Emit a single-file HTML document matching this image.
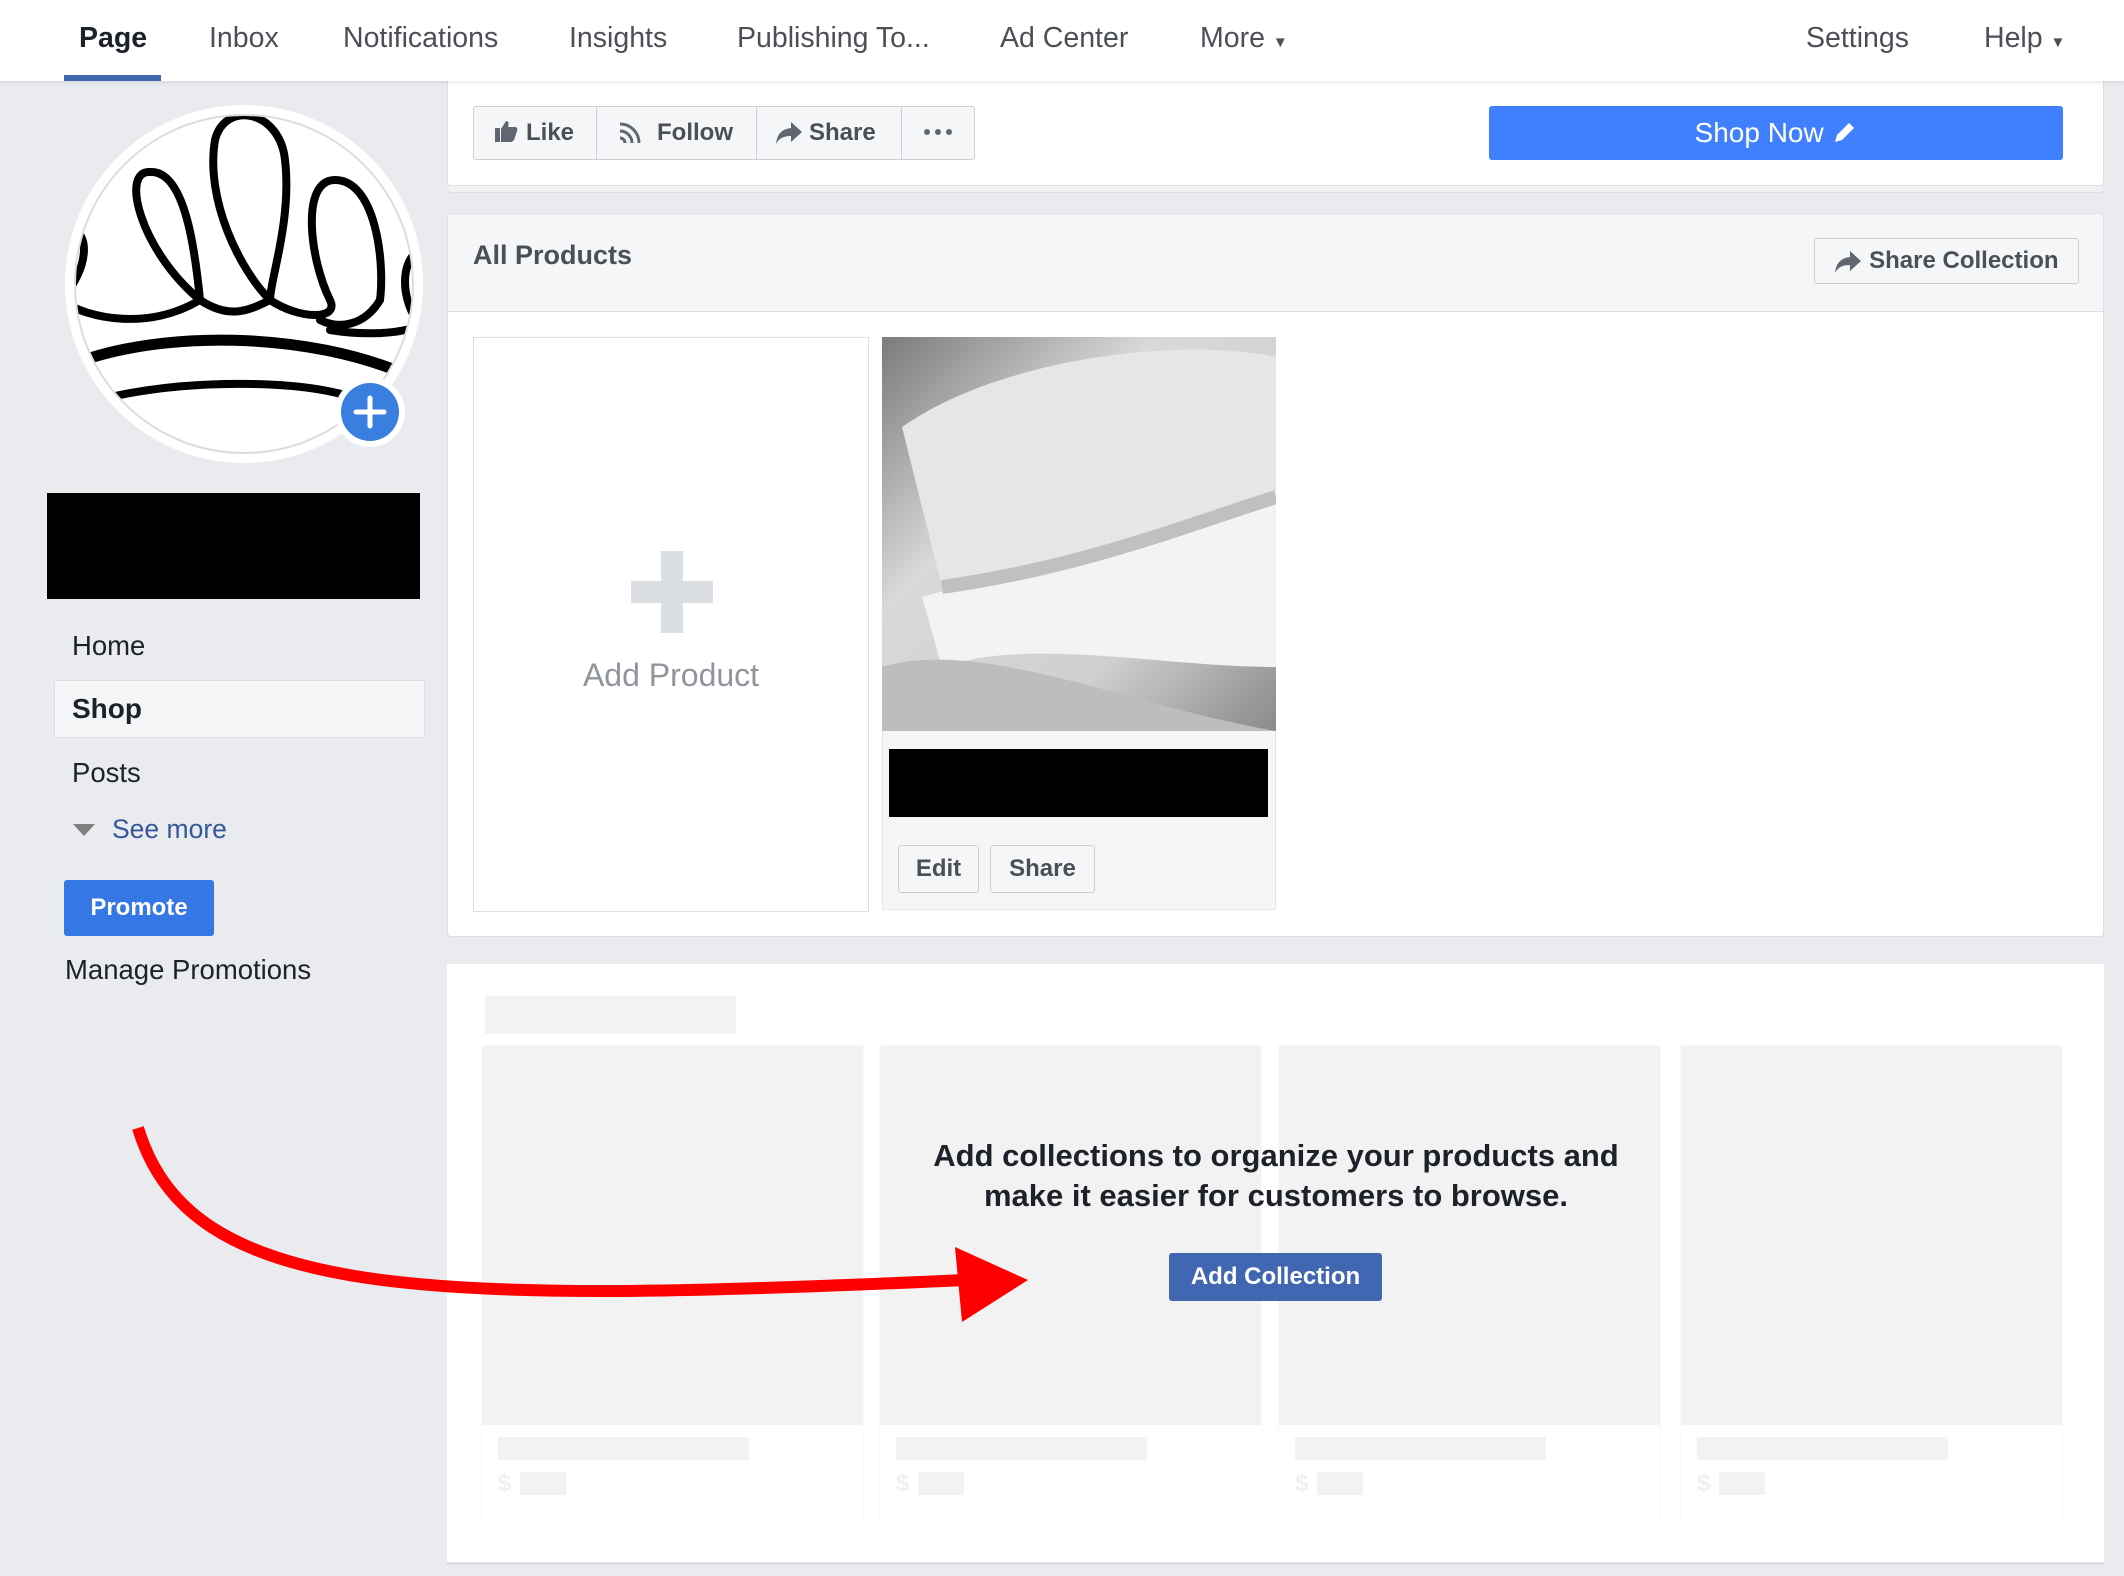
<!DOCTYPE html>
<html><head><meta charset="utf-8"><style>
*{margin:0;padding:0;box-sizing:border-box}
body{width:2124px;height:1576px;background:#e9ebee;font-family:"Liberation Sans",sans-serif;position:relative;overflow:hidden;color:#1d2129}
.a{position:absolute}
.nav{left:0;top:0;width:2124px;height:81px;background:#fff;box-shadow:0 2px 3px rgba(0,0,0,.08);z-index:5}
.ni{position:absolute;top:22px;font-size:28.5px;color:#4b4f56;white-space:nowrap}
.card{background:#fff;border:1px solid #dddfe2;border-radius:4px}
.btn{position:absolute;border:1px solid #ccd0d5;background:#f5f6f7;border-radius:3px;font-weight:bold;color:#4b4f56;font-size:24px;display:flex;align-items:center;justify-content:center}
.ph{position:absolute;background:#f2f2f3}
.col{position:absolute;top:1046px;width:381px;height:477px;background:#fff;box-shadow:0 0 2px rgba(0,0,0,.06)}
.dl{position:absolute;left:16px;top:424px;font-size:24px;color:#f0f0f1;font-weight:bold}
</style></head><body>
<div class="a nav">
 <div class="ni" style="left:79px;color:#1d2129;font-weight:bold">Page</div>
 <div class="a" style="left:64px;top:75px;width:97px;height:6px;background:#4267b2"></div>
 <div class="ni" style="left:209px">Inbox</div>
 <div class="ni" style="left:343px">Notifications</div>
 <div class="ni" style="left:569px">Insights</div>
 <div class="ni" style="left:737px">Publishing To...</div>
 <div class="ni" style="left:1000px">Ad Center</div>
 <div class="ni" style="left:1200px">More <span style="font-size:15px">▼</span></div>
 <div class="ni" style="left:1806px">Settings</div>
 <div class="ni" style="left:1984px">Help <span style="font-size:15px">▼</span></div>
</div>

<!-- profile -->
<div class="a" style="left:65px;top:105px;width:358px;height:358px;border-radius:50%;background:#fff"></div>
<div class="a" style="left:74px;top:114px;width:340px;height:340px;border-radius:50%;border:2px solid #dadde1"></div>
<svg class="a" style="left:0;top:0" width="500" height="500">
<defs><clipPath id="c"><circle cx="244" cy="284" r="168"/></clipPath></defs>
<g clip-path="url(#c)" fill="none" stroke="#000" stroke-width="8" stroke-linecap="round">
<path d="M60 300 C 90 320 150 330 200 300 C 140 250 120 170 150 172 C 185 170 195 250 200 300 C 230 320 250 310 270 300 C 240 270 205 200 215 140 C 225 100 280 110 285 160 C 292 220 270 280 270 300 C 300 320 340 320 330 300 C 310 260 300 180 335 180 C 375 180 385 260 380 300 C 365 325 340 330 320 320"/>
<path d="M60 300 C 90 270 90 230 70 230"/>
<path d="M330 330 C 360 335 400 335 420 325 C 400 300 400 260 420 250"/>
<path d="M90 358 C 180 330 310 335 400 372" stroke-width="11"/>
<path d="M115 396 C 190 380 290 380 345 395" stroke-width="8"/>
</g>
<circle cx="370" cy="412" r="35" fill="#fff"/>
<circle cx="370" cy="412" r="29" fill="#3a7fe0"/>
<path d="M356 412H384M370 398V426" stroke="#fff" stroke-width="5" stroke-linecap="round"/>
</svg>
<div class="a" style="left:47px;top:493px;width:373px;height:106px;background:#000"></div>
<div class="a" style="left:72px;top:630px;font-size:27.5px">Home</div>
<div class="a" style="left:54px;top:680px;width:371px;height:58px;background:#f5f6f7;border:1px solid #dddfe2"></div>
<div class="a" style="left:72px;top:693px;font-size:28px;font-weight:bold">Shop</div>
<div class="a" style="left:72px;top:757px;font-size:27.5px">Posts</div>
<div class="a" style="left:73px;top:824px;width:0;height:0;border-left:11px solid transparent;border-right:11px solid transparent;border-top:12px solid #7f7f7f"></div>
<div class="a" style="left:112px;top:814px;font-size:26.5px;color:#365899">See more</div>
<div class="a" style="left:64px;top:880px;width:150px;height:56px;background:#3578e5;border-radius:3px;color:#fff;font-weight:bold;font-size:24px;display:flex;align-items:center;justify-content:center">Promote</div>
<div class="a" style="left:65px;top:954px;font-size:27.5px">Manage Promotions</div>

<!-- top card -->
<div class="a" style="left:2090px;top:81px;width:14px;height:54px;background:#fff;border:1px solid #dddfe2"></div>
<div class="a card" style="left:447px;top:60px;width:1657px;height:126px;box-shadow:0 8px 0 -2px #f0f1f3,0 9px 0 -2px #dddfe2"></div>
<div class="a" style="left:473px;top:106px;width:502px;height:54px;border:1px solid #ccd0d5;border-radius:3px;background:#f5f6f7"></div>
<div class="a" style="left:596px;top:107px;width:1px;height:52px;background:#ccd0d5"></div>
<div class="a" style="left:756px;top:107px;width:1px;height:52px;background:#ccd0d5"></div>
<div class="a" style="left:901px;top:107px;width:1px;height:52px;background:#ccd0d5"></div>
<svg class="a" style="left:492px;top:118px" width="26" height="26"><path d="M3 10h5v14H3zM9 11l5-8c3 0 3 3 2 6h7c2 0 3 2 2 4l-3 9c-1 1-2 2-3 2H9z" fill="#606770"/></svg>
<div class="a" style="left:526px;top:119px;font-size:24px;font-weight:bold;color:#4b4f56">Like</div>
<svg class="a" style="left:617px;top:120px" width="26" height="26"><path d="M3 4a19 19 0 0 1 19 19M3 11a12 12 0 0 1 12 12M3 18a5 5 0 0 1 5 5" stroke="#606770" stroke-width="3" fill="none"/></svg>
<div class="a" style="left:657px;top:119px;font-size:24px;font-weight:bold;color:#4b4f56">Follow</div>
<svg class="a" style="left:775px;top:120px" width="28" height="26"><path d="M16 2l11 10-11 10v-6C9 16 4 18 1 24 2 14 7 9 16 8z" fill="#606770"/></svg>
<div class="a" style="left:809px;top:119px;font-size:24px;font-weight:bold;color:#4b4f56">Share</div>
<svg class="a" style="left:922px;top:127px" width="32" height="10"><circle cx="5" cy="5" r="3" fill="#606770"/><circle cx="16" cy="5" r="3" fill="#606770"/><circle cx="27" cy="5" r="3" fill="#606770"/></svg>
<div class="a" style="left:1489px;top:106px;width:574px;height:54px;background:#4080ff;border-radius:3px;color:#fff;font-size:28px;display:flex;align-items:center;justify-content:center">Shop Now&nbsp;<svg width="26" height="26"><path d="M4 22l2-7L18 3l5 5L11 20z" fill="#fff"/></svg></div>

<!-- All products -->
<div class="a card" style="left:447px;top:213px;width:1657px;height:724px"></div>
<div class="a" style="left:448px;top:214px;width:1655px;height:98px;background:#f5f6f7;border-bottom:1px solid #dddfe2;border-radius:4px 4px 0 0"></div>
<div class="a" style="left:473px;top:240px;font-size:27px;font-weight:bold;color:#4b4f56">All Products</div>
<div class="btn" style="left:1814px;top:238px;width:265px;height:46px"><svg width="28" height="24"><path d="M16 2l11 10-11 10v-6C9 16 4 18 1 24 2 14 7 9 16 8z" fill="#606770"/></svg>&nbsp;Share Collection</div>
<div class="a" style="left:473px;top:337px;width:396px;height:575px;border:1px solid #dddfe2;background:#fff"></div>
<div class="a" style="left:631px;top:581px;width:82px;height:22px;background:#dadde1"></div>
<div class="a" style="left:661px;top:551px;width:22px;height:82px;background:#dadde1"></div>
<div class="a" style="left:473px;top:657px;width:396px;text-align:center;font-size:32px;color:#90949c">Add Product</div>
<div class="a" style="left:882px;top:337px;width:394px;height:573px;background:#f5f6f7;border:1px solid #e5e6e9"></div>
<svg class="a" style="left:882px;top:337px" width="394" height="394">
<defs><linearGradient id="g" x1="0" y1="0" x2="1" y2="1"><stop offset="0" stop-color="#7a7a7a"/><stop offset=".35" stop-color="#d9d9d9"/><stop offset=".7" stop-color="#cfcfcf"/><stop offset="1" stop-color="#8a8a8a"/></linearGradient></defs>
<rect width="394" height="394" fill="url(#g)"/>
<path d="M20 90 C 120 20 300 0 394 20 L394 160 C 300 190 200 230 60 250 Z" fill="#e6e6e6"/>
<path d="M40 260 C 150 230 280 190 394 160 L394 330 C 280 330 150 300 60 330 Z" fill="#f3f3f3"/>
<path d="M60 250 C 200 230 300 190 394 160" stroke="#c0c0c0" stroke-width="14" fill="none"/>
<path d="M0 330 C 100 300 250 370 394 394 L0 394Z" fill="#bdbdbd"/>
</svg>
<div class="a" style="left:889px;top:749px;width:379px;height:68px;background:#000"></div>
<div class="btn" style="left:898px;top:845px;width:81px;height:48px">Edit</div>
<div class="btn" style="left:990px;top:845px;width:105px;height:48px">Share</div>

<!-- collections -->
<div class="a" style="left:447px;top:964px;width:1657px;height:601px;background:#fff;border-bottom:3px solid #dddfe2"></div>
<div class="ph" style="left:485px;top:996px;width:251px;height:38px"></div>
<div class="col" style="left:482px"><div class="ph" style="left:0;top:0;width:381px;height:379px"></div><div class="ph" style="left:16px;top:391px;width:251px;height:23px"></div><div class="dl">$</div><div class="ph" style="left:38px;top:426px;width:46px;height:23px"></div></div>
<div class="col" style="left:880px"><div class="ph" style="left:0;top:0;width:381px;height:379px"></div><div class="ph" style="left:16px;top:391px;width:251px;height:23px"></div><div class="dl">$</div><div class="ph" style="left:38px;top:426px;width:46px;height:23px"></div></div>
<div class="col" style="left:1279px"><div class="ph" style="left:0;top:0;width:381px;height:379px"></div><div class="ph" style="left:16px;top:391px;width:251px;height:23px"></div><div class="dl">$</div><div class="ph" style="left:38px;top:426px;width:46px;height:23px"></div></div>
<div class="col" style="left:1681px"><div class="ph" style="left:0;top:0;width:381px;height:379px"></div><div class="ph" style="left:16px;top:391px;width:251px;height:23px"></div><div class="dl">$</div><div class="ph" style="left:38px;top:426px;width:46px;height:23px"></div></div>
<div class="a" style="left:876px;top:1136px;width:800px;text-align:center;font-size:31px;font-weight:bold;line-height:40px;color:#1d2129">Add collections to organize your products and<br>make it easier for customers to browse.</div>
<div class="a" style="left:1169px;top:1253px;width:213px;height:48px;background:#4267b2;border-radius:3px;color:#fff;font-weight:bold;font-size:24px;display:flex;align-items:center;justify-content:center">Add Collection</div>

<svg class="a" style="left:0;top:0" width="2124" height="1576">
<path d="M138 1128 C 190 1300, 420 1305, 965 1280" stroke="#f00" stroke-width="12" fill="none"/>
<path d="M955 1247 L1028 1280 L962 1322 Z" fill="#f00"/>
</svg>
</body></html>
